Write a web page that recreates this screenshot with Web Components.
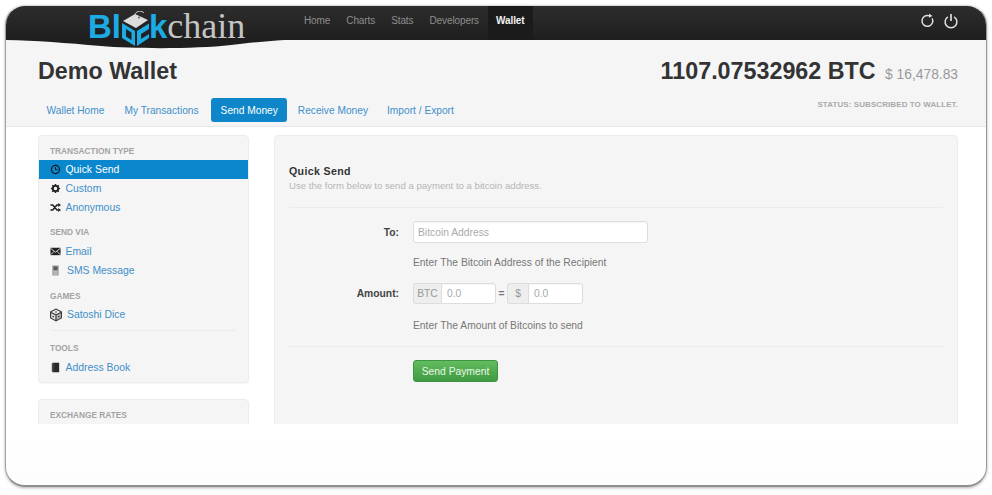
<!DOCTYPE html>
<html>
<head>
<meta charset="utf-8">
<title>Blockchain - Demo Wallet</title>
<style>
html, body { margin: 0; padding: 0; background: #fff; }
body { font-family: "Liberation Sans", Arial, sans-serif; width: 992px; height: 495px; overflow: hidden; }
</style>
</head>
<body>
<bc-window>
  <bc-topbar></bc-topbar>
  <bc-wallet-head></bc-wallet-head>
  <bc-content>
    <bc-sidebar></bc-sidebar>
    <bc-send-form></bc-send-form>
  </bc-content>
</bc-window>

<script>
const blue = '#3f8fc9'
const icons = {
  clock: `<circle cx="6" cy="6" r="4.4" fill="none" stroke="currentColor" stroke-width="1.3"/><path d="M6 3.4V6.2H8.4" fill="none" stroke="currentColor" stroke-width="1"/>`,
  gear: `<circle cx="6" cy="6" r="2.9" fill="none" stroke="currentColor" stroke-width="2"/><path d="M6 1V3M6 9V11M1 6H3M9 6H11M2.5 2.5L3.9 3.9M8.1 8.1L9.5 9.5M2.5 9.5L3.9 8.1M8.1 3.9L9.5 2.5" stroke="currentColor" stroke-width="1.7"/>`,
  shuffle: `<path d="M0.5 3.2H3L7.5 8.8H9.5M0.5 8.8H3L7.5 3.2H9.5" fill="none" stroke="currentColor" stroke-width="1.6"/><path d="M9 1L12 3.2L9 5.4ZM9 6.6L12 8.8L9 11Z" fill="currentColor"/>`,
  mail: `<path d="M0.5 2H11.5V10H0.5Z" fill="currentColor"/><path d="M0.5 2.4L6 6.8L11.5 2.4M0.8 9.6L4.4 5.8M11.2 9.6L7.6 5.8" fill="none" stroke="#f5f5f5" stroke-width="0.9"/>`,
  phone: `<path d="M2.5 0.5H9.5V11.5H2.5Z" fill="#a0a0a0"/><path d="M3.8 1.6H8.2V5.6H3.8Z" fill="#5c5c5c"/><path d="M3.8 7H8.2M3.8 8.5H8.2M3.8 10H8.2" stroke="#d0d0d0" stroke-width="0.7"/>`,
  dice: `<path d="M7 0.6L13 3.6V10.2L7 13.4L1 10.2V3.6Z" fill="#3c3c3c"/><path d="M7 1.8L11.6 4L7 6.2L2.4 4Z" fill="#eee"/><path d="M2.2 5.2L6.4 7.2V12L2.2 9.7Z" fill="#ddd"/><path d="M7.6 7.2L11.8 5.2V9.7L7.6 12Z" fill="#bbb"/><circle cx="7" cy="4" r="0.8" fill="#333"/><circle cx="4.2" cy="8.6" r="0.8" fill="#333"/><circle cx="9.8" cy="8.6" r="0.8" fill="#333"/>`,
  book: `<path d="M2 1.8L3 0.8H10V11.2H3L2 10.2Z" fill="#2a2a2a"/><path d="M3.2 0.9V11" stroke="#777" stroke-width="0.7"/>`
}

class BcWindow extends HTMLElement {
  connectedCallback() {
    const shadow = this.attachShadow({mode: 'open'})
    shadow.innerHTML = `
<style>
:host {
  display: flex;
  flex-direction: column;
  box-sizing: border-box;
  width: 982px;
  height: 482px;
  margin: 5px 0 0 5px;
  background: linear-gradient(#fff, #fff 430px, #fdfdfd);
  border: 1px solid #a5a5a5;
  border-width: 1px 1.5px 2px 1px;
  border-color: #ddd #989898 #8f8f8f #a0a0a0;
  border-radius: 20px;
  overflow: hidden;
  box-shadow: 0 1px 3px rgba(0,0,0,.3);
}
</style>
<slot></slot>`
  }
}

class BcTopbar extends HTMLElement {
  connectedCallback() {
    const shadow = this.attachShadow({mode: 'open'})
    shadow.innerHTML = `
<style>
:host {
  display: flex;
  position: relative;
  flex: none;
  height: 34px;
  background: linear-gradient(#2d2d2d, #1e1e1e);
  font-size: 10px;
  z-index: 2;
}
.bulge { position: absolute; left: 0; top: 33px; }
.logo {
  position: absolute;
  left: 82px;
  top: 0;
  display: flex;
  align-items: baseline;
  white-space: nowrap;
}
.logo b { font: bold 33px/40px "Liberation Sans", sans-serif; color: #1cabe4; }
.logo span { font: 36px/40px "Liberation Serif", serif; color: #c4c4c4; }
.logo svg { align-self: flex-start; margin: 5px -2px 0 0; flex: none; }
nav { display: flex; margin-left: 290px; }
nav a { padding: 0 8px; line-height: 29px; height: 34px; box-sizing: border-box; color: #8e8e8e; letter-spacing: -.1px; }
nav a.on { color: #f2f2f2; font-weight: bold; background: #1b1b1b; margin-left: 1px; }
.tools { display: flex; gap: 7px; margin-left: auto; padding: 7px 27px 0 0; height: 16px; }
</style>
<svg class="bulge" width="300" height="10" viewBox="0 0 300 10"><path d="M0 0H294C270 1.5 250 3 225 6C190 10 130 10 95 7C60 4 30 1.5 0 1Z" fill="#1f1f1f"/></svg>
<div class="logo"><b>Bl</b><svg width="30" height="36" viewBox="0 0 30 36">
  <path d="M1 12L14 20V35L1 27Z M5 18V25.5L10.5 29V21.5Z" fill="#1cabe4" fill-rule="evenodd"/>
  <path d="M16 20L28 12.5V18L20 23V28L28 23V27L16 35Z" fill="#1cabe4"/>
  <path d="M2 10L14 3L27 9L15 17Z" fill="#dcdcdc"/>
  <path d="M14 3C16 -0.5 21 -0.5 23 2" fill="none" stroke="#ccc" stroke-width="1"/>
  <circle cx="18" cy="6.5" r="1.1" fill="#666"/>
</svg><b>k</b><span>chain</span></div>
<nav><a>Home</a><a>Charts</a><a>Stats</a><a>Developers</a><a class="on">Wallet</a></nav>
<div class="tools">
  <svg width="16" height="16" viewBox="0 0 16 16"><path d="M12.2 5.4A5.4 5.4 0 1 1 9.5 2.9" fill="none" stroke="#dedede" stroke-width="1.5"/><path d="M8.6 0.8L12.4 2.6L9.4 5Z" fill="#dedede" transform="rotate(12 10 3)"/></svg>
  <svg width="16" height="16" viewBox="0 0 16 16"><path d="M4.9 3.8A5.9 5.9 0 1 0 11.1 3.8" fill="none" stroke="#dedede" stroke-width="1.5"/><path d="M8 1V8" stroke="#dedede" stroke-width="1.7"/></svg>
</div>`
  }
}

class BcWalletHead extends HTMLElement {
  connectedCallback() {
    const shadow = this.attachShadow({mode: 'open'})
    shadow.innerHTML = `
<style>
:host {
  display: block;
  flex: none;
  box-sizing: border-box;
  height: 87px;
  padding: 0 28px 0 32px;
  background: #f5f5f6;
  border-bottom: 1px solid #e8e8e8;
}
.top { display: flex; justify-content: space-between; align-items: baseline; padding-top: 17px; height: 32px; }
h1 { margin: 0; font-size: 23.3px; line-height: 28px; font-weight: bold; color: #333; }
.bal { font-size: 23.3px; line-height: 28px; font-weight: bold; color: #333; }
.bal small { font-size: 13.8px; font-weight: normal; color: #999; margin-left: 3px; }
.low { display: flex; justify-content: space-between; margin-top: 9px; }
.tabs { display: flex; gap: 1px; margin-left: -1px; }
.tabs a { padding: 0 9.5px; height: 24px; line-height: 25px; font-size: 10.2px; color: ${blue}; border-radius: 3px; white-space: nowrap; }
.tabs a.on { background: #0f86c9; color: #fff; margin-left: 2px; }
.tabs a:last-child { margin-left: -1px; }
.status { font-size: 8px; font-weight: bold; color: #aaa; margin-top: 2px; line-height: 10px; letter-spacing: .08px; }
</style>
<div class="top"><h1>Demo Wallet</h1><div class="bal">1107.07532962 BTC <small>$ 16,478.83</small></div></div>
<div class="low">
  <div class="tabs"><a>Wallet Home</a><a>My Transactions</a><a class="on">Send Money</a><a>Receive Money</a><a>Import / Export</a></div>
  <div class="status">STATUS: SUBSCRIBED TO WALLET.</div>
</div>`
  }
}

class BcContent extends HTMLElement {
  connectedCallback() {
    const shadow = this.attachShadow({mode: 'open'})
    shadow.innerHTML = `
<style>
:host {
  display: flex;
  flex: none;
  height: 297px;
  overflow: hidden;
  box-sizing: border-box;
  padding: 8px 28px 0 32px;
  gap: 25px;
  background: #fff;
}
</style>
<slot></slot>`
  }
}

class BcNavHead extends HTMLElement {
  connectedCallback() {
    const shadow = this.attachShadow({mode: 'open'})
    shadow.innerHTML = `
<style>
:host { display: block; padding-left: 11px; font-size: 8.3px; font-weight: bold; line-height: 12px; color: #a3a3a3; }
</style>
<slot></slot>`
  }
}

class BcNavItem extends HTMLElement {
  connectedCallback() {
    const shadow = this.attachShadow({mode: 'open'})
    const icon = this.getAttribute('icon')
    const size = this.getAttribute('size') || 11
    shadow.innerHTML = `
<style>
:host { display: block; }
a { display: flex; align-items: center; height: 19px; padding-left: 11px; font-size: 10.4px; color: ${blue}; white-space: nowrap; }
:host([active]) a { background: #0b88cd; color: #fff; }
span { display: flex; width: 15.5px; flex: none; color: #222; }
:host([active]) span { color: #111; margin-top: -1px; }
:host([icon=phone]) span { width: 17px; }
:host([icon=dice]) span { width: 18px; margin-left: -1px; }
svg { overflow: visible; }
</style>
<a><span><svg width="${size}" height="${size}" viewBox="0 0 ${size == 14 ? 14 : 12} ${size == 14 ? 14 : 12}">${icons[icon]}</svg></span><slot></slot></a>`
  }
}

class BcSidebar extends HTMLElement {
  connectedCallback() {
    const shadow = this.attachShadow({mode: 'open'})
    shadow.innerHTML = `
<style>
:host { display: flex; flex-direction: column; gap: 16px; flex: none; width: 211px; }
.card {
  background: #f5f5f5;
  border: 1px solid #ececec;
  border-radius: 4px;
  box-shadow: 0 1px 1px rgba(0,0,0,.04);
  padding: 9px 0 5px;
  box-sizing: border-box;
}
.gap { height: 9px; }
hr { border: 0; border-top: 1px solid #ebebeb; margin: 6px 12px 11px; }
bc-nav-head + bc-nav-item { margin-top: 3px; }
.via, .book { margin-top: 4px !important; }
.second { flex: none; height: 60px; padding-top: 9px; }
.sp2 { height: 10px; }
</style>
<div class="card">
  <bc-nav-head>TRANSACTION TYPE</bc-nav-head>
  <bc-nav-item icon="clock" active>Quick Send</bc-nav-item>
  <bc-nav-item icon="gear">Custom</bc-nav-item>
  <bc-nav-item icon="shuffle">Anonymous</bc-nav-item>
  <div class="gap"></div>
  <bc-nav-head>SEND VIA</bc-nav-head>
  <bc-nav-item class="via" icon="mail">Email</bc-nav-item>
  <bc-nav-item icon="phone">SMS Message</bc-nav-item>
  <div class="sp2"></div>
  <bc-nav-head>GAMES</bc-nav-head>
  <bc-nav-item icon="dice" size="14">Satoshi Dice</bc-nav-item>
  <hr>
  <bc-nav-head>TOOLS</bc-nav-head>
  <bc-nav-item class="book" icon="book">Address Book</bc-nav-item>
</div>
<div class="card second"><bc-nav-head>EXCHANGE RATES</bc-nav-head></div>`
  }
}

class BcSendForm extends HTMLElement {
  connectedCallback() {
    const shadow = this.attachShadow({mode: 'open'})
    shadow.innerHTML = `
<style>
:host {
  display: block;
  flex: none;
  box-sizing: border-box;
  width: 684px;
  height: 330px;
  background: #f5f5f5;
  border: 1px solid #ececec;
  border-radius: 4px;
  padding: 29px 14px 0;
  font-size: 10.3px;
  color: #666;
}
h2 { margin: 0; font-size: 10.6px; line-height: 13px; font-weight: bold; color: #333; letter-spacing: .35px; }
p { margin: 1px 0 0; font-size: 9.6px; line-height: 13px; color: #b5b5b5; }
hr { border: 0; border-top: 1px solid #ebebeb; margin: 0; }
.row { display: flex; align-items: center; }
label { width: 124px; padding-right: 14px; box-sizing: border-box; text-align: right; font-weight: bold; color: #444; flex: none; }
.field {
  box-sizing: border-box;
  background: #fff;
  border: 1px solid #ddd;
  border-radius: 3px;
  color: #aaa;
  box-shadow: inset 0 1px 1px rgba(0,0,0,.04);
  display: flex;
  align-items: center;
  padding-left: 4px;
}
.addon {
  box-sizing: border-box;
  display: flex; align-items: center; justify-content: center;
  background: #eee;
  border: 1px solid #ddd;
  border-right: 0;
  border-radius: 3px 0 0 3px;
  color: #999;
  height: 21px;
}
.amt { height: 21px; border-radius: 0 3px 3px 0; padding-left: 5px; }
.help { margin-left: 124px; color: #777; line-height: 13px; }
.btn {
  display: flex; align-items: center; justify-content: center;
  box-sizing: border-box;
  width: 85px; height: 22px;
  margin-left: 124px;
  background: linear-gradient(#62bd5f, #3f9a41);
  border: 1px solid #3f9443;
  border-radius: 3px;
  color: #e9f6e9;
}
</style>
<h2>Quick Send</h2>
<p>Use the form below to send a payment to a bitcoin address.</p>
<hr style="margin-top:15px">
<div class="row" style="margin-top:13px"><label>To:</label><div class="field" style="width:235px;height:22px">Bitcoin Address</div></div>
<div class="help" style="margin-top:13px">Enter The Bitcoin Address of the Recipient</div>
<div class="row" style="margin-top:14px">
  <label>Amount:</label>
  <div class="addon" style="width:28px">BTC</div><div class="field amt" style="width:55px">0.0</div>
  <span style="width:11px;text-align:center;font-weight:bold;color:#777">=</span>
  <div class="addon" style="width:21px">$</div><div class="field amt" style="width:55px">0.0</div>
</div>
<div class="help" style="margin-top:15px">Enter The Amount of Bitcoins to send</div>
<hr style="margin-top:14px">
<div class="btn" style="margin-top:13px">Send Payment</div>`
  }
}

customElements.define('bc-window', BcWindow)
customElements.define('bc-topbar', BcTopbar)
customElements.define('bc-wallet-head', BcWalletHead)
customElements.define('bc-content', BcContent)
customElements.define('bc-nav-head', BcNavHead)
customElements.define('bc-nav-item', BcNavItem)
customElements.define('bc-sidebar', BcSidebar)
customElements.define('bc-send-form', BcSendForm)
</script>
</body>
</html>
